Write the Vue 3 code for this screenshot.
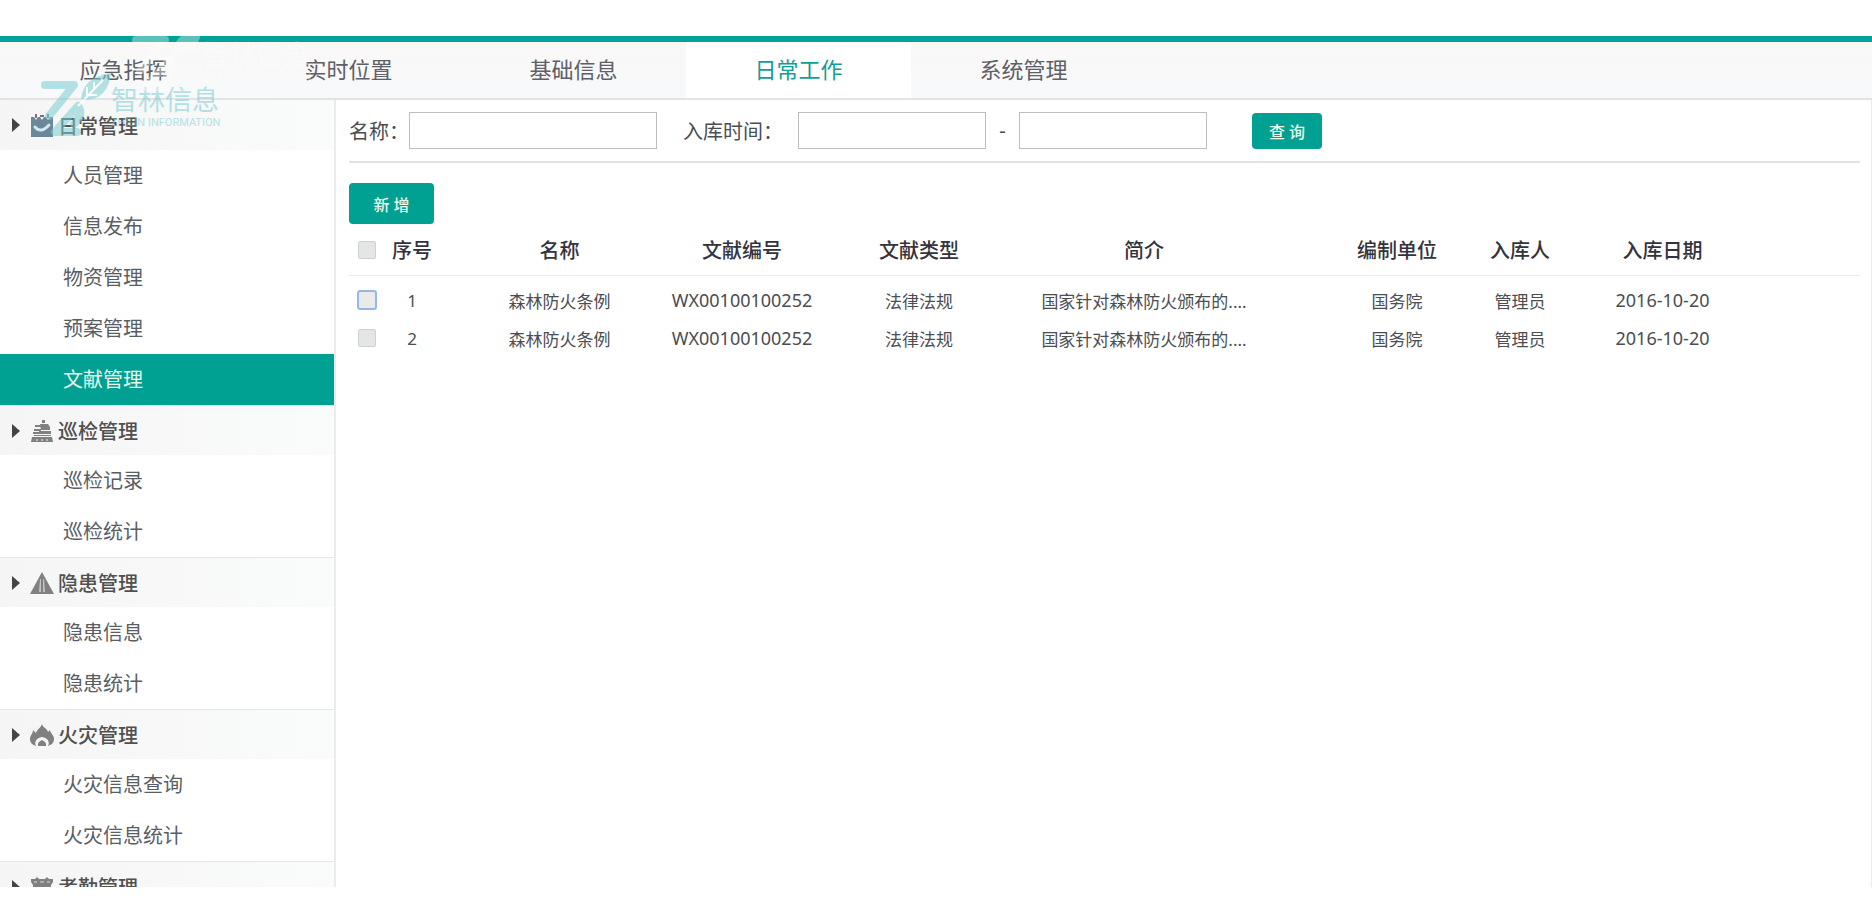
<script setup>
import { ref } from 'vue'

const tabs = ['应急指挥', '实时位置', '基础信息', '日常工作', '系统管理']
const activeTab = ref('日常工作')
const activeItem = ref('文献管理')

const groups = [
  { title: '日常管理', icon: 'clip', items: ['人员管理', '信息发布', '物资管理', '预案管理', '文献管理'] },
  { title: '巡检管理', icon: 'patrol', items: ['巡检记录', '巡检统计'] },
  { title: '隐患管理', icon: 'warn', items: ['隐患信息', '隐患统计'] },
  { title: '火灾管理', icon: 'fire', items: ['火灾信息查询', '火灾信息统计'] },
  { title: '考勤管理', icon: 'card', items: [] },
]

const rows = [1, 2].map((id) => ({
  id,
  name: '森林防火条例',
  code: 'WX00100100252',
  type: '法律法规',
  intro: '国家针对森林防火颁布的....',
  org: '国务院',
  by: '管理员',
  date: '2016-10-20',
}))
const selected = ref([])
</script>

<template>
  <div class="page">
    <header class="topbar">
      <nav class="tabs">
        <a
          v-for="t in tabs"
          :key="t"
          href="#"
          class="tab"
          :class="{ active: t === activeTab }"
          @click.prevent="activeTab = t"
        >{{ t }}</a>
      </nav>
    </header>

    <div class="body">
      <aside class="side">
        <section v-for="g in groups" :key="g.title" class="group">
          <h2 class="group-title">
            <svg class="caret" viewBox="0 0 8 14"><path d="M0 0 8 7 0 14z" /></svg>
            <svg v-if="g.icon === 'clip'" class="icon" viewBox="0 0 24 24">
              <path fill="#6b8799" d="M1 4h3l2 3 2-3h2l2 3 2-3h2l2 3 2-3h3v20H1z" />
              <path fill="#777" d="M5 1h2v4H5zM17 1h2v4h-2zM10 2h4v2h-4z" />
              <path fill="none" stroke="#cfeaf0" stroke-width="3" stroke-linecap="round" d="M5 14q6 7 14-2" />
            </svg>
            <svg v-else-if="g.icon === 'patrol'" class="icon" viewBox="0 0 24 24">
              <path d="M12 1h3v3h-3zM5 6h8v2H5zM10 5h8l2 3v3h-9zM4 10h7v2H4zM9 12h12v3H3v-2h6zM4 16h17v1H4zM2 18h20l1 5H1z" />
              <path stroke="#f5f5f5" d="M6 21h2M11 21h2M16 21h2" />
            </svg>
            <svg v-else-if="g.icon === 'warn'" class="icon" viewBox="0 0 24 24">
              <path d="M12 1 24 23H0z" />
              <path fill="#c4c4c4" d="M10 8h1v13H9zM13 8h1l1 13h-2z" />
            </svg>
            <svg v-else-if="g.icon === 'fire'" class="icon" viewBox="0 0 24 24">
              <path d="M12 1c1 4 5 4 6 8l2-2c0 3 4 5 4 9 0 4-3 6-6 7 2-4 0-8-6-9-6 1-8 5-6 9-3-1-6-3-6-7 0-4 3-5 3-9l3 3c1-4 5-5 6-9z" />
              <path d="M8 23q-1-4 4-6 5 2 4 6z" />
            </svg>
            <svg v-else class="icon" viewBox="0 0 24 24">
              <path d="M1 4h4l2-2 2 2h6l2-2 2 2h4v3l-2 3v12H3V10L1 7z" />
              <path stroke="#ddd" d="M4 7h3M10 7h4M17 7h3" />
            </svg>
            <span>{{ g.title }}</span>
          </h2>
          <a
            v-for="i in g.items"
            :key="i"
            href="#"
            class="item"
            :class="{ active: i === activeItem }"
            @click.prevent="activeItem = i"
          >{{ i }}</a>
        </section>
      </aside>

      <main class="main">
        <form class="search" @submit.prevent>
          <label for="name">名称：</label>
          <input id="name" class="field wide" type="text" />
          <label for="from" class="time-label">入库时间：</label>
          <input id="from" class="field" type="text" />
          <span class="dash">-</span>
          <input id="to" class="field" type="text" aria-label="入库时间止" />
          <button class="btn query" type="submit">查 询</button>
        </form>

        <button class="btn add" type="button">新 增</button>

        <table class="grid">
          <colgroup>
            <col class="c-check" /><col class="c-no" /><col class="c-name" /><col class="c-code" />
            <col class="c-type" /><col class="c-intro" /><col class="c-org" /><col class="c-by" /><col />
          </colgroup>
          <thead>
            <tr>
              <th><input type="checkbox" class="check" aria-label="全选" /></th>
              <th>序号</th>
              <th class="name">名称</th>
              <th>文献编号</th>
              <th>文献类型</th>
              <th>简介</th>
              <th>编制单位</th>
              <th>入库人</th>
              <th class="date">入库日期</th>
            </tr>
          </thead>
          <tbody>
            <tr v-for="r in rows" :key="r.id">
              <td>
                <input
                  v-model="selected"
                  type="checkbox"
                  class="check"
                  :class="{ focused: r.id === 1 }"
                  :value="r.id"
                  :aria-label="'选择 ' + r.id"
                />
              </td>
              <td>{{ r.id }}</td>
              <td class="name">{{ r.name }}</td>
              <td class="latin">{{ r.code }}</td>
              <td>{{ r.type }}</td>
              <td>{{ r.intro }}</td>
              <td>{{ r.org }}</td>
              <td>{{ r.by }}</td>
              <td class="date latin">{{ r.date }}</td>
            </tr>
          </tbody>
        </table>
      </main>
    </div>

    <div v-for="k in ['mark', 'ghost']" :key="k" class="brand" :class="k">
      <svg class="brand-logo" viewBox="0 0 70 66">
        <path d="M4 13H33L8 44" class="z" />
        <path d="M37 34 14 60H36M37 34q6 8-4 18" class="z" />
        <path d="M40 27Q42 5 70 1q-3 26-25 27z" class="leaf" />
        <path d="M37 34 62 8M46 24v-9M47 23h9M53 17v-7" class="vein" />
      </svg>
      <div class="brand-text">
        <div class="brand-name">智林信息</div>
        <div class="brand-sub">ZHILIN INFORMATION</div>
      </div>
    </div>
  </div>
</template>

<style>
body {
  margin: 0;
  background: #fff;
}
</style>

<style scoped>
.page {
  position: relative;
  box-sizing: border-box;
  height: 100vh;
  padding: 36px 0 35px;
  display: flex;
  flex-direction: column;
  overflow: hidden;
  font-family: "Noto Sans", "Noto Sans CJK SC", sans-serif;
  color: #4a4d52;
}
.topbar {
  flex: none;
  border-top: 6px solid #00a199;
  border-bottom: 2px solid #e2e3e3;
  background: linear-gradient(#faf8f7, #f7f9fa);
}
.tabs {
  display: flex;
  padding-left: 11px;
}
.tab {
  width: 225px;
  height: 56px;
  line-height: 54px;
  text-align: center;
  font-size: 22px;
  color: #5d6066;
  text-decoration: none;
}
.tab.active {
  background: #fff;
  color: #11a096;
}
.body {
  flex: 1;
  min-height: 0;
  display: flex;
}
.side {
  flex: none;
  width: 334px;
  overflow: hidden;
  border-right: 2px solid #ececec;
}
.group-title {
  box-sizing: border-box;
  height: 50px;
  margin: 0;
  padding-left: 12px;
  display: flex;
  align-items: center;
  font-size: 20px;
  font-weight: 500;
  color: #505050;
  background: linear-gradient(90deg, #f5f5f5, #fafbfb);
}
.group + .group .group-title {
  border-top: 1px solid #e6e8e8;
}
.caret {
  width: 8px;
  height: 14px;
  margin-right: 10px;
  fill: #444;
}
.icon {
  width: 24px;
  height: 24px;
  margin-right: 4px;
  fill: #808080;
}
.item {
  display: block;
  height: 51px;
  line-height: 51px;
  padding-left: 63px;
  font-size: 20px;
  color: #5a5e64;
  text-decoration: none;
}
.item.active {
  background: #00a092;
  color: #e8f7e8;
}
.main {
  flex: 1;
  min-width: 0;
  padding: 0 11px 0 13px;
  border-right: 1px solid #ececec;
}
.search {
  display: flex;
  align-items: center;
  height: 61px;
  border-bottom: 2px solid #e3e3df;
  font-size: 20px;
}
.field {
  box-sizing: border-box;
  width: 188px;
  height: 37px;
  padding: 0 8px;
  border: 1px solid #bdbdb9;
  background: #fff;
  font: inherit;
}
.field.wide {
  width: 248px;
}
.time-label {
  margin: 0 15px 0 26px;
}
.dash {
  width: 33px;
  text-align: center;
}
.btn {
  border: 0;
  border-radius: 4px;
  background: #00a092;
  color: #eafbea;
  font-family: inherit;
  font-size: 16px;
  font-weight: 500;
}
.query {
  width: 70px;
  height: 36px;
  margin-left: 45px;
}
.add {
  display: block;
  width: 85px;
  height: 41px;
  margin-top: 20px;
}
.grid {
  width: 100%;
  table-layout: fixed;
  border-collapse: collapse;
  text-align: center;
  font-size: 17px;
}
.c-check { width: 36px; }
.c-no { width: 54px; }
.c-name { width: 176px; }
.c-code { width: 254px; }
.c-type { width: 100px; }
.c-intro { width: 350px; }
.c-org { width: 156px; }
.c-by { width: 90px; }
.grid th,
.grid td {
  padding: 0;
  height: 38px;
  white-space: nowrap;
}
.grid th {
  height: 51px;
  border-bottom: 1px solid #ececec;
  font-size: 20px;
  font-weight: 500;
  color: #33333d;
}
.grid tbody::before {
  content: "";
  display: block;
  height: 5px;
}
.grid .latin {
  font-size: 18px;
}
.grid .name {
  padding-left: 65px;
}
.grid .date {
  padding-right: 100px;
}
.check {
  appearance: none;
  display: block;
  box-sizing: border-box;
  width: 18px;
  height: 18px;
  margin: 0 auto;
  border: 1px solid #cfd1d1;
  border-radius: 2px;
  background: #e4e6e6;
}
.check:checked {
  background: #00a092;
}
.check.focused {
  width: 20px;
  height: 20px;
  border: 2px solid #93b8ee;
  border-radius: 3px;
  background: #ece9e9;
}
.brand {
  position: absolute;
  display: flex;
  pointer-events: none;
  color: #7cced2;
}
.mark {
  left: 41px;
  top: 72px;
  opacity: 0.55;
}
.ghost {
  left: 132px;
  top: 27px;
  color: #fff;
  opacity: 0.35;
}
.brand-logo {
  width: 70px;
  height: 66px;
}
.z {
  fill: none;
  stroke: currentColor;
  stroke-width: 8;
  stroke-linejoin: round;
  stroke-linecap: round;
}
.leaf {
  fill: currentColor;
}
.vein {
  fill: none;
  stroke: #fff;
  stroke-width: 2;
}
.brand-name {
  margin-top: 12px;
  font-size: 27px;
  line-height: 32px;
}
.brand-sub {
  font-family: Roboto, sans-serif;
  font-size: 11px;
  line-height: 14px;
}
</style>
